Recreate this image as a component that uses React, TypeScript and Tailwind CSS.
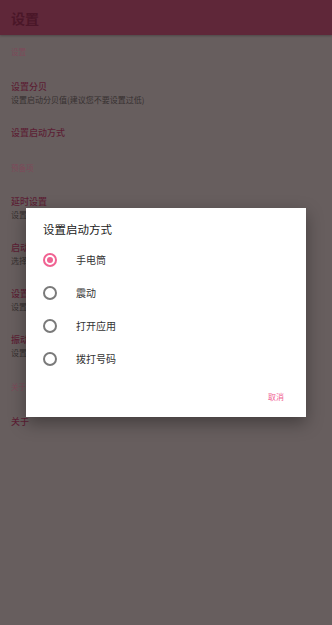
import React from 'react';

const font = { fontFamily: '"Noto Sans CJK SC", "Noto Sans", sans-serif' };

type Row =
  | { kind: 'cat'; title: string; h: string }
  | { kind: 'item'; title: string; sub?: string; h: string };

const rows: Row[] = [
  { kind: 'cat', title: '设置', h: 'h-[34px]' },
  { kind: 'item', title: '设置分贝', sub: '设置启动分贝值(建议您不要设置过低)', h: 'h-[47px]' },
  { kind: 'item', title: '设置启动方式', h: 'h-[34px]' },
  { kind: 'cat', title: '预备项', h: 'h-[35px]' },
  { kind: 'item', title: '延时设置', sub: '设置启动延时时间', h: 'h-[46px]' },
  { kind: 'item', title: '启动后操作', sub: '选择启动后的操作', h: 'h-[46px]' },
  { kind: 'item', title: '设置持续时间', sub: '设置持续的时间', h: 'h-[46px]' },
  { kind: 'item', title: '振动设置', sub: '设置振动强度', h: 'h-[46px]' },
  { kind: 'cat', title: '关于', h: 'h-[36px]' },
  { kind: 'item', title: '关于', h: 'h-[33px]' },
];

const options = ['手电筒', '震动', '打开应用', '拨打号码'];

const Radio: React.FC<{ checked: boolean }> = ({ checked }) => (
  <span
    className={
      'flex h-[14px] w-[14px] items-center justify-center rounded-full border-2 ' +
      (checked ? 'border-[#f06292]' : 'border-[#7a7a7a]')
    }
  >
    {checked && <span className="h-[6px] w-[6px] rounded-full bg-[#f06292]" />}
  </span>
);

export default function App() {
  return (
    <div className="relative h-[625px] w-[332px] overflow-hidden bg-[#675e5e]" style={font}>
      {/* toolbar */}
      <div className="flex h-[35px] items-center bg-[#5f2739] px-[11px] shadow-[0_1px_2px_rgba(0,0,0,0.25)]">
        <span className="text-[14px] font-bold leading-none text-[#4a1628]">设置</span>
      </div>

      {/* preference list */}
      <div className="flex flex-col">
        {rows.map((r, i) =>
          r.kind === 'cat' ? (
            <div key={i} className={`flex items-center px-[11px] ${r.h}`}>
              <span className="text-[7.5px] leading-none text-[#7d4a5a]">{r.title}</span>
            </div>
          ) : (
            <div key={i} className={`flex flex-col justify-center gap-[3px] px-[11px] ${r.h}`}>
              <span className="text-[9px] leading-[10px] font-medium text-[#5c1e35]">{r.title}</span>
              {r.sub && <span className="text-[8px] leading-[9px] text-[#363030]">{r.sub}</span>}
            </div>
          )
        )}
      </div>

      {/* dialog */}
      <div className="absolute inset-0 flex items-center justify-center">
        <div className="flex h-[209px] w-[280px] flex-col bg-white shadow-[0_6px_16px_rgba(0,0,0,0.35)]">
          <div className="px-[17px] pt-[14px] text-[11.5px] leading-[14px] text-[#212121]">设置启动方式</div>
          <div className="mt-[7px] flex flex-col">
            {options.map((o, i) => (
              <div key={o} className="flex h-[33px] items-center pl-[17px]">
                <Radio checked={i === 0} />
                <span className="ml-[19px] text-[10px] leading-none text-[#333333]">{o}</span>
              </div>
            ))}
          </div>
          <div className="mt-auto flex justify-end pb-[16px] pr-[22px]">
            <span className="text-[8px] leading-none text-[#f06292]">取消</span>
          </div>
        </div>
      </div>
    </div>
  );
}
